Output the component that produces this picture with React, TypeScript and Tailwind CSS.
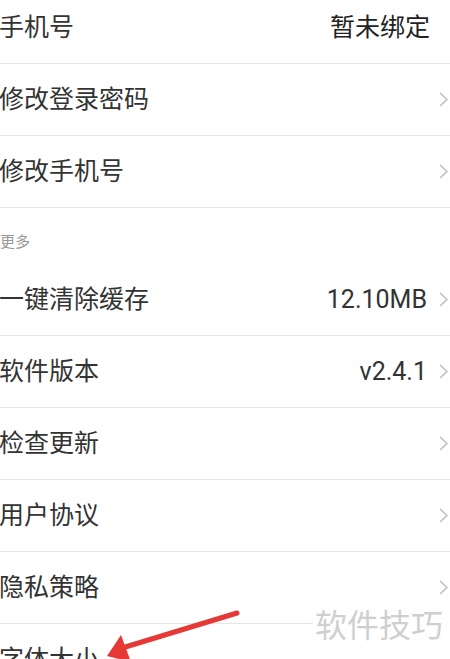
import React from 'react';

type Row = { label: string; value?: string; arrow?: boolean };

const top: Row[] = [
  { label: '手机号', value: '暂未绑定', arrow: false },
  { label: '修改登录密码', arrow: true },
  { label: '修改手机号', arrow: true },
];

const more: Row[] = [
  { label: '一键清除缓存', value: '12.10MB', arrow: true },
  { label: '软件版本', value: 'v2.4.1', arrow: true },
  { label: '检查更新', arrow: true },
  { label: '用户协议', arrow: true },
  { label: '隐私策略', arrow: true },
  { label: '字体大小', arrow: true },
];

function Chevron() {
  return (
    <svg width="9" height="15" viewBox="0 0 9 15" className="shrink-0">
      <polyline points="1,1 8,7.5 1,14" fill="none" stroke="#b8b8b8" strokeWidth="1.3" />
    </svg>
  );
}

function SettingRow({ row }: { row: Row }) {
  return (
    <div className="h-[72px] flex items-center border-b border-[#e6e6e6]">
      <span className="flex-1 -ml-[1px] text-[25px] text-[#333] leading-none">{row.label}</span>
      {row.value && (
        <span className={`text-[25px] leading-none ${row.arrow ? 'text-[#333] mr-[12px]' : 'text-[#222] mr-[20px]'}`}>
          {row.value}
        </span>
      )}
      {row.arrow && <span className="mr-[2px] flex"><Chevron /></span>}
    </div>
  );
}

export default function App() {
  return (
    <div
      className="relative w-[450px] h-[659px] overflow-hidden bg-white"
      style={{ fontFamily: "Roboto, 'Noto Sans CJK SC', sans-serif" }}
    >
      <div className="-mt-[8px] flex flex-col">
        {top.map((r) => (
          <SettingRow key={r.label} row={r} />
        ))}
        <div className="h-[56px] flex items-end pb-[11px]">
          <span className="text-[15px] text-[#999] leading-[22px]">更多</span>
        </div>
        {more.map((r) => (
          <SettingRow key={r.label} row={r} />
        ))}
      </div>

      {/* watermark */}
      <div className="absolute left-[313px] top-[600px] w-[137px] h-[59px] bg-white flex items-start pt-[6px] pl-[2px]">
        <span className="text-[32px] leading-[40px] text-[#cfcfcf] tracking-[0px]">软件技巧</span>
      </div>

      {/* red arrow */}
      <svg className="absolute left-0 top-0" width="450" height="659" viewBox="0 0 450 659">
        <line x1="237" y1="613" x2="122" y2="648" stroke="#e53935" strokeWidth="5" strokeLinecap="round" />
        <polygon points="107,656 121,635 131,662" fill="#e53935" />
      </svg>
    </div>
  );
}
